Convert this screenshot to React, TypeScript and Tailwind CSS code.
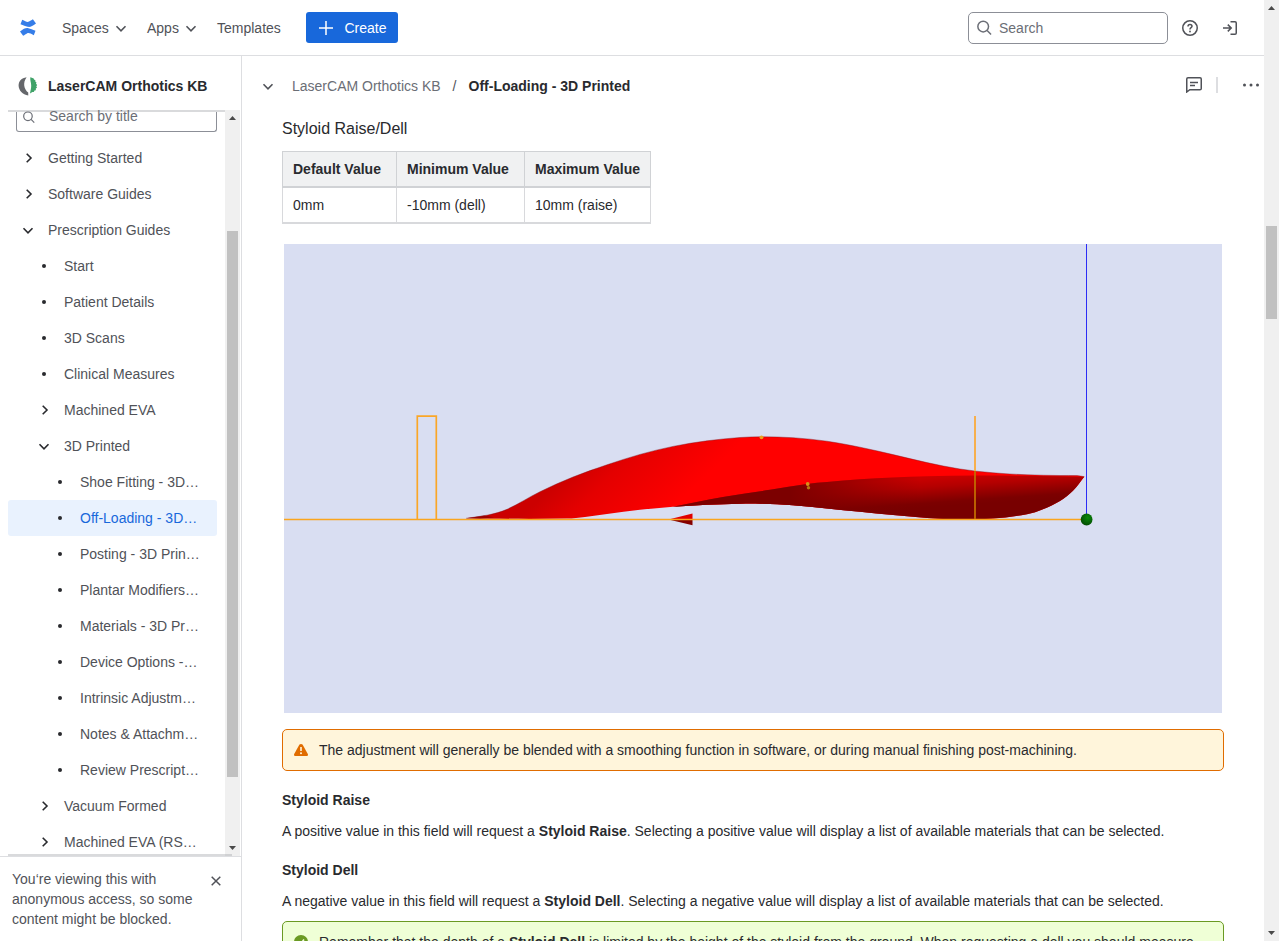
import React from "react";

type Pt = [number, number];

/** Smooth curve through unevenly spaced points, as cubic segments (without the leading move). */
function curve(pts: Pt[]): string {
  const dist = (p: Pt, q: Pt) => Math.hypot(q[0] - p[0], q[1] - p[1]);
  const slope = (i: number): Pt => {
    const p = pts[Math.max(i - 1, 0)];
    const q = pts[i];
    const r = pts[Math.min(i + 1, pts.length - 1)];
    const len = dist(p, q) + dist(q, r);
    return [(r[0] - p[0]) / len, (r[1] - p[1]) / len];
  };
  const f = (n: number) => n.toFixed(2);
  let d = "";
  for (let i = 0; i < pts.length - 1; i++) {
    const b = pts[i];
    const c = pts[i + 1];
    const h = dist(b, c) / 3;
    const s = slope(i);
    const t = slope(i + 1);
    d += `C${f(b[0] + s[0] * h)} ${f(b[1] + s[1] * h)} ${f(c[0] - t[0] * h)} ${f(c[1] - t[1] * h)} ${c[0]} ${c[1]}`;
  }
  return d;
}

const topEdge: Pt[] = [
  [466, 518.3], [488, 515], [507, 509.3], [540, 491.7], [573, 477], [607, 464.8], [640, 454.4], [673, 446.4],
  [707, 440.8], [740, 437.5], [762, 436.8], [793, 437.7], [827, 441.2], [860, 447.2], [893, 454.6], [927, 462.6],
  [960, 469], [993, 472.8], [1027, 474.8], [1060, 475.5], [1077, 475.6], [1084.3, 476.7],
];
const bottomEdge: Pt[] = [
  [1084.3, 476.7], [1073, 490.7], [1060, 501], [1043, 509.2], [1027, 514.2], [993, 518.6], [960, 519.4],
  [927, 518], [893, 515.1], [860, 511.8], [827, 508.4], [793, 505.3], [760, 503.7], [740, 503.7], [707, 504.7],
  [673, 506.8],
];
const frontBottom: Pt[] = [
  [673, 506.8], [640, 509.8], [607, 514], [585, 516.9], [567, 518.6], [490, 518.8], [466, 518.3],
];
const ridge: Pt[] = [
  [673, 506.8], [698, 501.8], [723, 496.9], [770, 489.8], [807, 484], [827, 482.1], [860, 479.2], [893, 477.4],
  [927, 476.2], [975, 475.6], [1040, 476], [1084.3, 476.7],
];

const bodyPath = "M466 518.3" + curve(topEdge) + curve(bottomEdge) + curve(frontBottom) + "Z";
const undersidePath = "M673 506.8" + curve(ridge) + curve(bottomEdge) + "Z";

function OrthoticFigure() {
  return (
    <svg className="ml-0.5 block h-[469px] w-[938px]" viewBox="284 244 938 469">
      <defs>
        <linearGradient id="upper" gradientUnits="userSpaceOnUse" x1="575" y1="465" x2="665" y2="560">
          <stop offset="0" stopColor="#cc0000" />
          <stop offset="0.25" stopColor="#e40000" />
          <stop offset="0.55" stopColor="#f40000" />
          <stop offset="0.75" stopColor="#ff0000" />
        </linearGradient>
        <linearGradient id="under" gradientUnits="userSpaceOnUse" x1="975" y1="475" x2="977" y2="504">
          <stop offset="0" stopColor="#c80000" />
          <stop offset="0.3" stopColor="#b40000" />
          <stop offset="0.85" stopColor="#7c0000" />
          <stop offset="1" stopColor="#780000" />
        </linearGradient>
        <linearGradient id="fade" gradientUnits="userSpaceOnUse" x1="790" y1="0" x2="920" y2="0">
          <stop offset="0" stopColor="#7c0000" />
          <stop offset="1" stopColor="#7c0000" stopOpacity="0" />
        </linearGradient>
        <radialGradient id="ball" cx="0.6" cy="0.35" r="0.7">
          <stop offset="0" stopColor="#0a8a0a" />
          <stop offset="1" stopColor="#034a03" />
        </radialGradient>
      </defs>
      <rect x="284" y="244" width="938" height="469" fill="#d9def2" />
      <path d={bodyPath} fill="url(#upper)" />
      <path d={undersidePath} fill="url(#under)" />
      <path d={undersidePath} fill="url(#fade)" />
      <path d="M466 518.3L484 515.5L494 517.2L480 519Z" fill="#8a0000" opacity="0.7" />
      <path d={"M466 518.3" + curve(topEdge)} fill="none" stroke="#7d1520" strokeWidth="0.6" opacity="0.7" />
      <rect x="1086" y="244" width="1" height="270" fill="#2c2cf5" />
      <path d="M668.500 519.500L692.500 513.500V519.500Z" fill="#e00000" />
      <path d="M668.500 519.500L692.500 525.300V519.500Z" fill="#850000" />
      <path d="M284 519.500H1084" stroke="#faa51e" strokeWidth="1.600" />
      <path d="M417.300 519V416.200H436.300V519" fill="none" stroke="#faa628" strokeWidth="1.700" />
      <path d="M975 416V471" stroke="#faaa3c" strokeWidth="1.800" />
      <path d="M975 471V519" stroke="#c26a00" strokeWidth="1.800" />
      <circle cx="1086.600" cy="519.500" r="5.900" fill="url(#ball)" />
      <circle cx="761.500" cy="437.300" r="1.900" fill="#eaa020" />
      <circle cx="807.700" cy="484" r="1.900" fill="#d99018" />
      <circle cx="808.500" cy="487.800" r="1.700" fill="#b87510" />
    </svg>
  );
}

function Chevron({ className, right }: { className?: string; right?: boolean }) {
  return (
    <svg className={"shrink-0 " + (className ?? "")} width="16" height="16" viewBox="0 0 16 16" fill="none" stroke="currentColor" strokeWidth="1.600">
      <path d={right ? "M6.700 3.700L11 8L6.700 12.300" : "M3.500 6.300L8 10.800L12.500 6.300"} />
    </svg>
  );
}

function Magnifier({ size }: { size: number }) {
  return (
    <svg className="shrink-0" width={size} height={size} viewBox="0 0 16 16" fill="none" stroke="currentColor" strokeWidth="1.600">
      <circle cx="6.600" cy="7" r="5.700" />
      <path d="M10.800 11.200L15 15.400" />
    </svg>
  );
}

function ScrollArrow({ down }: { down?: boolean }) {
  return (
    <svg className="block shrink-0" width="15" height="15" viewBox="0 0 15 15" fill="#4a4a4a">
      <path d={down ? "M4 5H11L7.500 9Z" : "M4 10H11L7.500 6Z"} />
    </svg>
  );
}

type Item = { label: string; level: 0 | 1 | 2; kind: "closed" | "open" | "leaf"; active?: boolean };

const items: Item[] = [
  { label: "Getting Started", level: 0, kind: "closed" },
  { label: "Software Guides", level: 0, kind: "closed" },
  { label: "Prescription Guides", level: 0, kind: "open" },
  { label: "Start", level: 1, kind: "leaf" },
  { label: "Patient Details", level: 1, kind: "leaf" },
  { label: "3D Scans", level: 1, kind: "leaf" },
  { label: "Clinical Measures", level: 1, kind: "leaf" },
  { label: "Machined EVA", level: 1, kind: "closed" },
  { label: "3D Printed", level: 1, kind: "open" },
  { label: "Shoe Fitting - 3D…", level: 2, kind: "leaf" },
  { label: "Off-Loading - 3D…", level: 2, kind: "leaf", active: true },
  { label: "Posting - 3D Prin…", level: 2, kind: "leaf" },
  { label: "Plantar Modifiers…", level: 2, kind: "leaf" },
  { label: "Materials - 3D Pr…", level: 2, kind: "leaf" },
  { label: "Device Options -…", level: 2, kind: "leaf" },
  { label: "Intrinsic Adjustm…", level: 2, kind: "leaf" },
  { label: "Notes & Attachm…", level: 2, kind: "leaf" },
  { label: "Review Prescript…", level: 2, kind: "leaf" },
  { label: "Vacuum Formed", level: 1, kind: "closed" },
  { label: "Machined EVA (RS…", level: 1, kind: "closed" },
];

const indent = ["pl-3", "pl-7", "pl-11"];

function TreeRow({ item }: { item: Item }) {
  return (
    <div className={`flex h-9 w-[209px] shrink-0 items-center rounded-[3px] whitespace-nowrap ${indent[item.level]} ${item.active ? "bg-[#e9f2fe] text-[#1868db]" : ""}`}>
      {item.kind === "leaf" ? (
        <span className="flex w-4 shrink-0 justify-center">
          <span className="size-1 rounded-full bg-[#292a2e]" />
        </span>
      ) : (
        <Chevron right={item.kind === "closed"} className="text-[#292a2e]" />
      )}
      <span className="ml-3">{item.label}</span>
    </div>
  );
}

function TopBar() {
  return (
    <header className="flex h-14 shrink-0 items-center border-b border-[#dddee1] pl-5 text-[#505258]">
      <svg width="16" height="17" viewBox="0 0 16 17" fill="#357de8" className="shrink-0">
        <path d="M2.200 0.800C5.600 2.500 7.200 3.500 9 2.600C10.300 1.900 11.300 1.200 12.900 0.300L16 4.500C12.300 7.400 10.200 8.300 7.600 7.800C5.500 7.300 3.400 6.300 0.500 5.300Z" />
        <path d="M13.800 16.200C10.400 14.500 8.800 13.500 7 14.400C5.700 15.100 4.700 15.800 3.100 16.700L0 12.500C3.700 9.600 5.800 8.700 8.400 9.200C10.500 9.700 12.600 10.700 15.500 11.700Z" />
      </svg>
      <span className="ml-[26px] w-[47px]">Spaces</span>
      <Chevron className="ml-1" />
      <span className="ml-[18px] w-8">Apps</span>
      <Chevron className="ml-1" />
      <span className="ml-[18px] w-16">Templates</span>
      <button className="ml-[25px] flex h-[31px] w-[92px] items-center rounded-[3px] bg-[#1868db] pl-3 text-white">
        <svg width="16" height="16" viewBox="0 0 16 16" stroke="white" strokeWidth="1.500">
          <path d="M8 1V15M1 8H15" />
        </svg>
        <span className="ml-[10.5px]">Create</span>
      </button>
      <div className="mr-3.5 ml-auto flex h-8 w-[200px] items-center rounded-[5px] border border-[#8c8f97] pl-2 text-[#6b6e76]">
        <Magnifier size={15} />
        <span className="ml-[7px]">Search</span>
      </div>
      <svg width="16" height="16" viewBox="0 0 16 16" fill="none" stroke="currentColor" strokeWidth="1.500">
        <circle cx="8" cy="8" r="7.250" />
        <path d="M6 6.500C6 5.300 6.800 4.500 8 4.500S10 5.200 10 6.300C10 7.700 8 7.600 8 9.400" />
        <circle cx="8" cy="11.500" r="0.900" fill="currentColor" stroke="none" />
      </svg>
      <svg className="mr-[26px] ml-6" width="16" height="16" viewBox="0 0 16 16" fill="none" stroke="currentColor" strokeWidth="1.500">
        <path d="M1 8H9M5.800 4.600L9.200 8L5.800 11.400M8.500 1.750H13C13.700 1.750 14.250 2.300 14.250 3V13C14.250 13.700 13.700 14.250 13 14.250H8.500" />
      </svg>
    </header>
  );
}

function Sidebar() {
  return (
    <aside className="flex w-[242px] shrink-0 flex-col border-r border-[#dddee1] text-[#505258]">
      <div className="flex h-[54px] shrink-0 items-center pt-1.5 pl-[18px]">
        <svg width="20" height="20" viewBox="0 0 20 20">
          <path d="M8.600 1.200C3.500 2 0.500 5 0.600 9.800C0.800 14.500 4.500 18.600 10.300 19.500L10.200 16.500C6 13 4.500 7 8.600 1.200Z" fill="#65676b" />
          <path d="M12.300 1.300L14.500 2L15.700 2.400L16 3.600L17.400 4.300L17.300 5.600L18.500 6.600L18 7.800L19.200 9L18.300 10.200L19 11.700L17.800 12.600L17.900 14.200L16.500 14.500L15.800 16L14.400 16L12 17.500C12.500 14 13.300 12 13.200 9.500C13.100 6.500 12 4.500 12.300 1.300Z" fill="#3fa268" />
        </svg>
        <span className="ml-2.5 font-bold whitespace-nowrap text-[#292a2e]">LaserCAM Orthotics KB</span>
      </div>
      <div className="flex h-[746px] shrink-0">
        <div className="ml-2 flex w-[217px] flex-col overflow-hidden">
          <div className="h-0.5 shrink-0 bg-[#d9dadc]" />
          <div className="mb-2 ml-2 flex h-5 w-[201px] shrink-0 items-start rounded-b-[3px] border border-t-0 border-[#8c8f97] pl-1.5 text-[#6b6e76]">
            <span className="-mt-[1.5px] flex items-center"><Magnifier size={12} /></span>
            <span className="-mt-1.5 ml-3.5 leading-5">Search by title</span>
          </div>
          <div className="flex h-[714px] shrink-0 flex-col overflow-hidden">
            {items.map((item) => <TreeRow key={item.label} item={item} />)}
          </div>
          <div className="h-0.5 shrink-0 bg-[#d9dadc]" />
        </div>
        <div className="relative flex w-[15px] flex-col items-center bg-[#f0f0f0]">
          <ScrollArrow />
          <div className="mt-[106px] mb-auto h-[546px] w-[11px] bg-[#c1c1c1]" />
          <ScrollArrow down />
          <div className="absolute bottom-0 left-0 h-0.5 w-[7px] bg-[#d0d1d3]" />
        </div>
      </div>
      <div className="flex flex-1 justify-between border-t border-[#dddee1] pt-3 pl-3 leading-5">
        <p className="whitespace-nowrap">You‘re viewing this with<br />anonymous access, so some<br />content might be blocked.</p>
        <svg className="mt-1 mr-[17px]" width="16" height="16" viewBox="0 0 16 16" stroke="currentColor" strokeWidth="1.500">
          <path d="M3.700 3.700L12.300 12.300M12.300 3.700L3.700 12.300" />
        </svg>
      </div>
    </aside>
  );
}

function Main() {
  return (
    <main className="min-w-0 flex-1 overflow-hidden text-[#292a2e]">
      <div className="flex h-[60px] items-center pl-[18px] whitespace-nowrap">
        <Chevron className="text-[#505258]" />
        <span className="ml-4 text-[#6b6e76]">LaserCAM Orthotics KB</span>
        <span className="mx-3 text-[#505258]">/</span>
        <span className="font-bold">Off-Loading - 3D Printed</span>
        <svg className="mb-0.5 ml-auto text-[#505258]" width="16" height="16" viewBox="0 0 16 16" fill="none" stroke="currentColor" strokeWidth="1.500">
          <path d="M0.750 15V2C0.750 1.300 1.300 0.750 2 0.750H14C14.700 0.750 15.250 1.300 15.250 2V11.500C15.250 12.200 14.700 12.750 14 12.750H3.800Z" />
          <path d="M4 5.500H12M4 8.500H9" />
        </svg>
        <span className="mr-6 mb-0.5 ml-3.5 h-4 w-0.5 bg-[#dddee1]" />
        <svg className="mr-[5px] mb-0.5" width="17" height="16" viewBox="0 0 17 16" fill="#505258">
          <circle cx="2.500" cy="8" r="1.500" /><circle cx="9" cy="8" r="1.500" /><circle cx="15.500" cy="8" r="1.500" />
        </svg>
      </div>
      <div className="pr-10 pl-10">
        <h4 className="pt-px text-base leading-6">Styloid Raise/Dell</h4>
        <table className="mt-2.5 w-[368px] table-fixed border-collapse text-left">
          <colgroup><col className="w-[114px]" /><col className="w-32" /><col className="w-[126px]" /></colgroup>
          <thead>
            <tr className="h-[35px] bg-[#f0f1f2]">
              <th className="border border-b-2 border-[#d0d2d5] p-0 pl-2.5">Default Value</th>
              <th className="border border-b-2 border-[#d0d2d5] p-0 pl-2.5">Minimum Value</th>
              <th className="border border-b-2 border-[#d0d2d5] p-0 pl-2.5">Maximum Value</th>
            </tr>
          </thead>
          <tbody>
            <tr className="h-9">
              <td className="border border-b-2 border-[#d8d9dc] p-0 pl-2.5">0mm</td>
              <td className="border border-b-2 border-[#d8d9dc] p-0 pl-2.5">-10mm (dell)</td>
              <td className="border border-b-2 border-[#d8d9dc] p-0 pl-2.5">10mm (raise)</td>
            </tr>
          </tbody>
        </table>
        <div className="mt-5"><OrthoticFigure /></div>
        <div className="mt-4 flex h-[42px] w-[942px] items-center rounded-[5px] border border-[#e06c00] bg-[#fff5db] pl-2.5">
          <svg width="16" height="16" viewBox="0 0 16 16">
            <path d="M6.300 2.800C7.100 1.700 8.900 1.700 9.700 2.800L14.800 12C15.300 13 14.900 14 13.800 14H2.200C1.100 14 0.700 13 1.200 12Z" fill="#e06c00" />
            <path d="M8 5V9" stroke="#fff5db" strokeWidth="1.600" /><circle cx="8" cy="11.200" r="1" fill="#fff5db" />
          </svg>
          <span className="ml-2.5">The adjustment will generally be blended with a smoothing function in software, or during manual finishing post-machining.</span>
        </div>
        <h5 className="mt-[19px] leading-5 font-bold">Styloid Raise</h5>
        <p className="mt-[9px] leading-6">A positive value in this field will request a <b>Styloid Raise</b>. Selecting a positive value will display a list of available materials that can be selected.</p>
        <h5 className="mt-[17px] leading-5 font-bold">Styloid Dell</h5>
        <p className="mt-[9px] leading-6">A negative value in this field will request a <b>Styloid Dell</b>. Selecting a negative value will display a list of available materials that can be selected.</p>
        <div className="mt-2 flex h-[66px] w-[942px] items-start rounded-[5px] border border-[#6a9a23] bg-[#efffd6] pt-2 pl-2.5 leading-6">
          <svg className="mt-1 shrink-0" width="16" height="16" viewBox="0 0 16 16">
            <circle cx="8" cy="8" r="7" fill="#6a9a23" />
            <path d="M4.800 8.300L7.200 10.600L11 5.500" fill="none" stroke="#efffd6" strokeWidth="1.600" />
          </svg>
          <span className="ml-2.5 whitespace-nowrap">Remember that the depth of a <b>Styloid Dell</b> is limited by the height of the styloid from the ground. When requesting a dell you should measure</span>
        </div>
      </div>
    </main>
  );
}

export default function App() {
  return (
    <div className="flex h-[941px] w-[1279px] overflow-hidden bg-white font-['Liberation_Sans',Arial,sans-serif] text-sm">
      <div className="flex min-w-0 flex-1 flex-col">
        <TopBar />
        <div className="flex min-h-0 flex-1">
          <Sidebar />
          <Main />
        </div>
      </div>
      <div className="flex w-[15px] shrink-0 flex-col items-center bg-[#f0f0f0]">
        <ScrollArrow />
        <div className="mt-[211px] h-[93px] w-[11px] bg-[#c1c1c1]" />
        <div className="mt-auto"><ScrollArrow down /></div>
      </div>
    </div>
  );
}
